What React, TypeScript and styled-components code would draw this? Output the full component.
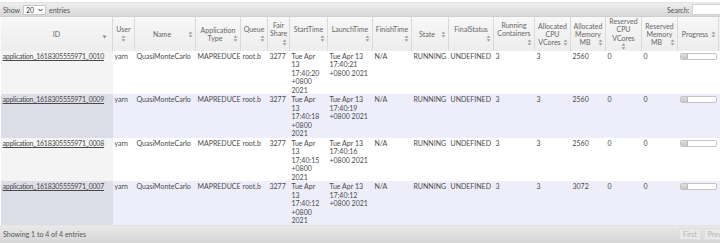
import React from 'react';
import styled, { createGlobalStyle } from 'styled-components';

const GlobalStyle = createGlobalStyle`
  html, body {
    margin: 0;
    padding: 0;
    background: #fff;
    overflow: hidden;
  }
  * {
    box-sizing: border-box;
  }
`;

const Page = styled.div`
  width: 780px;
  padding-top: 2px;
  font-family: Lato, 'Open Sans', sans-serif;
  font-size: 7px;
  color: #4a4a4a;
`;

const Bar = styled.div<{ $split: number }>`
  display: grid;
  grid-template-columns: ${p => p.$split}px 1fr;
  align-items: center;
  height: 15px;
  padding: 0 3px;
  background: linear-gradient(#eeeeee, #d8d8d8);
  border-top: 1px solid #e4e4e4;
  border-bottom: 1px solid #d0d0d0;
  color: #555;
`;

const FooterBar = styled(Bar)`
  height: 19px;
  background: linear-gradient(#e8e8e8, #d6d6d6);
`;

const Inline = styled.div`
  display: flex;
  align-items: center;
  gap: 3px;
`;

const SelectBox = styled.span`
  display: inline-flex;
  align-items: center;
  justify-content: space-between;
  width: 23px;
  height: 10px;
  padding: 0 2px;
  background: #fff;
  border: 1px solid #c8c8c8;
  border-radius: 1px;
  color: #333;
`;

const SearchBox = styled.span`
  display: inline-block;
  width: 80px;
  height: 11px;
  background: #fff;
  border: 1px solid #d0d0d0;
`;

const PageButton = styled.span`
  display: inline-block;
  padding: 1px 3px;
  color: #b4b4b4;
  border: 1px solid #dedede;
  background: #e9e9e9;
`;

const Table = styled.table`
  table-layout: fixed;
  border-collapse: collapse;
  width: 780px;
`;

const HeadRow = styled.tr`
  height: 33px;
`;

const HeadCell = styled.th`
  vertical-align: middle;
  text-align: center;
  font-weight: normal;
  color: #666;
  padding: 0 2px;
  line-height: 8.3px;
  background: linear-gradient(#f7f7f7, #ededed);
  border-right: 1px solid #dadada;
  border-left: 1px solid #fbfbfb;
`;

type Place = 'float' | 'right' | 'center';

const IconSlot = styled.span<{ $place: Place }>`
  display: ${p => (p.$place === 'float' ? 'inline-block' : 'block')};
  float: ${p => (p.$place === 'float' ? 'right' : 'none')};
  width: 6px;
  height: 8px;
  margin: ${p =>
    p.$place === 'right' ? '0 0 0 auto' : p.$place === 'center' ? '0 auto' : '0'};
  svg {
    display: block;
    margin: 1px auto 0;
  }
`;

const IdHeader = styled.div`
  position: relative;
  span {
    position: absolute;
    right: 3px;
    top: 2px;
  }
`;

const Row = styled.tr<{ $even: boolean }>`
  height: 43.5px;
  background: ${p => (p.$even ? '#eeeefa' : '#ffffff')};
`;

const Cell = styled.td<{ $sorted?: boolean; $even?: boolean }>`
  vertical-align: top;
  text-align: left;
  padding: 1px 3px 0 2px;
  line-height: 8.4px;
  background: ${p =>
    p.$sorted ? (p.$even ? '#dddde8' : '#f4f4f4') : 'transparent'};
`;

const AppLink = styled.a<{ $tight?: boolean }>`
  color: #4a4a4a;
  text-decoration: underline;
  white-space: nowrap;
  letter-spacing: ${p => (p.$tight ? '-0.25px' : '0')};
`;

const Progress = styled.div`
  width: 37px;
  height: 7px;
  margin-top: 1px;
  border: 1px solid #c4c4c4;
  border-radius: 2px;
  background: #fff;
  overflow: hidden;
`;

const ProgressFill = styled.div`
  height: 100%;
  background: linear-gradient(#dedede, #c8c8c8);
  border-right: 1px solid #bbb;
`;

const BothWays = () => (
  <svg width="5" height="7" viewBox="0 0 5 7">
    <path d="M2.5 0.5 L4.5 2.8 H0.5 Z M2.5 6.5 L0.5 4.2 H4.5 Z" fill="#9a9a9a" />
  </svg>
);

const DownOnly = () => (
  <svg width="5" height="4" viewBox="0 0 5 4">
    <path d="M0.5 0.5 H4.5 L2.5 3.5 Z" fill="#8a8a8a" />
  </svg>
);

type Col = { label: string; width: number; icon: Place };

const columns: Col[] = [
  { label: 'ID', width: 112, icon: 'float' },
  { label: 'User', width: 22, icon: 'center' },
  { label: 'Name', width: 61, icon: 'float' },
  { label: 'Application Type', width: 45, icon: 'float' },
  { label: 'Queue', width: 27, icon: 'right' },
  { label: 'Fair Share', width: 22, icon: 'right' },
  { label: 'StartTime', width: 38, icon: 'right' },
  { label: 'LaunchTime', width: 45, icon: 'right' },
  { label: 'FinishTime', width: 39, icon: 'right' },
  { label: 'State', width: 37, icon: 'float' },
  { label: 'FinalStatus', width: 45, icon: 'right' },
  { label: 'Running Containers', width: 41, icon: 'right' },
  { label: 'Allocated CPU VCores', width: 36, icon: 'float' },
  { label: 'Allocated Memory MB', width: 35, icon: 'float' },
  { label: 'Reserved CPU VCores', width: 36, icon: 'center' },
  { label: 'Reserved Memory MB', width: 36, icon: 'float' },
  { label: 'Progress', width: 41, icon: 'float' },
  { label: 'Tracking UI', width: 62, icon: 'float' },
];

type App = {
  id: string;
  start: string;
  launch: string;
  memory: number;
};

const apps: App[] = [
  { id: '0010', start: '17:40:20', launch: '17:40:21', memory: 2560 },
  { id: '0009', start: '17:40:18', launch: '17:40:19', memory: 2560 },
  { id: '0008', start: '17:40:15', launch: '17:40:16', memory: 2560 },
  { id: '0007', start: '17:40:12', launch: '17:40:12', memory: 3072 },
];

export default function AppsTable() {
  return (
    <>
      <GlobalStyle />
      <Page>
        <Bar $split={664}>
          <Inline>
            Show
            <SelectBox>
              20
              <svg width="5" height="4" viewBox="0 0 5 4">
                <path d="M0.5 0.8 L2.5 3 L4.5 0.8" stroke="#333" strokeWidth="1" fill="none" />
              </svg>
            </SelectBox>
            entries
          </Inline>
          <Inline>
            Search:
            <SearchBox />
          </Inline>
        </Bar>
        <Table>
          <colgroup>
            {columns.map((c, i) => (
              <col key={i} style={{ width: c.width }} />
            ))}
          </colgroup>
          <thead>
            <HeadRow>
              {columns.map((c, i) =>
                i === 0 ? (
                  <HeadCell key={i}>
                    <IdHeader>
                      ID
                      <span>
                        <DownOnly />
                      </span>
                    </IdHeader>
                  </HeadCell>
                ) : (
                  <HeadCell key={i}>
                    {c.label}
                    <IconSlot $place={c.icon}>
                      <BothWays />
                    </IconSlot>
                  </HeadCell>
                )
              )}
            </HeadRow>
          </thead>
          <tbody>
            {apps.map((a, r) => {
              const even = r % 2 === 1;
              return (
                <Row key={a.id} $even={even}>
                  <Cell $sorted $even={even}>
                    <AppLink href="#" $tight>
                      application_1618305555971_{a.id}
                    </AppLink>
                  </Cell>
                  <Cell>yarn</Cell>
                  <Cell>QuasiMonteCarlo</Cell>
                  <Cell>MAPREDUCE</Cell>
                  <Cell>root.b</Cell>
                  <Cell>3277</Cell>
                  <Cell>Tue Apr 13 {a.start} +0800 2021</Cell>
                  <Cell>Tue Apr 13 {a.launch} +0800 2021</Cell>
                  <Cell>N/A</Cell>
                  <Cell>RUNNING</Cell>
                  <Cell>UNDEFINED</Cell>
                  <Cell>3</Cell>
                  <Cell>3</Cell>
                  <Cell>{a.memory}</Cell>
                  <Cell>0</Cell>
                  <Cell>0</Cell>
                  <Cell>
                    <Progress>
                      <ProgressFill style={{ width: '22%' }} />
                    </Progress>
                  </Cell>
                  <Cell>
                    <AppLink href="#">ApplicationMaster</AppLink>
                  </Cell>
                </Row>
              );
            })}
          </tbody>
        </Table>
        <FooterBar $split={676}>
          <span>Showing 1 to 4 of 4 entries</span>
          <Inline>
            <PageButton>First</PageButton>
            <PageButton>Previous</PageButton>
          </Inline>
        </FooterBar>
      </Page>
    </>
  );
}
